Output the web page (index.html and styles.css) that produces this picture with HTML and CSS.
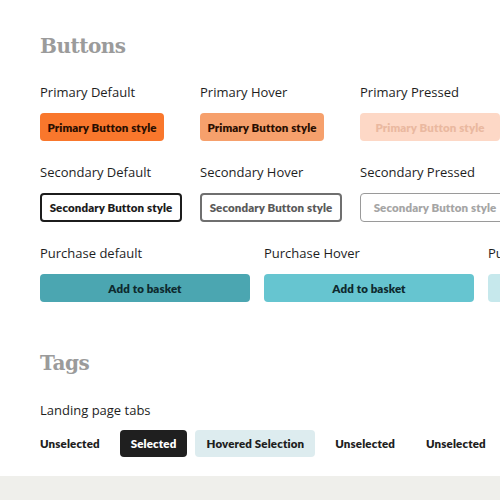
FILE: index.html
```html
<!DOCTYPE html>
<html>
<head>
<meta charset="utf-8">
<link rel="stylesheet" href="styles.css">
</head>
<body>
<main class="page">
  <h2 class="section-title">Buttons</h2>
  <div class="row row-3">
    <div class="cell">
      <div class="label">Primary Default</div>
      <span class="btn btn-primary">Primary Button style</span>
    </div>
    <div class="cell">
      <div class="label">Primary Hover</div>
      <span class="btn btn-primary-hover">Primary Button style</span>
    </div>
    <div class="cell">
      <div class="label">Primary Pressed</div>
      <span class="btn btn-primary-pressed">Primary Button style</span>
    </div>
  </div>
  <div class="row row-3">
    <div class="cell">
      <div class="label">Secondary Default</div>
      <span class="btn btn-sec">Secondary Button style</span>
    </div>
    <div class="cell">
      <div class="label">Secondary Hover</div>
      <span class="btn btn-sec btn-sec-hover">Secondary Button style</span>
    </div>
    <div class="cell">
      <div class="label">Secondary Pressed</div>
      <span class="btn btn-sec btn-sec-pressed">Secondary Button style</span>
    </div>
  </div>
  <div class="row row-purchase">
    <div class="cell">
      <div class="label">Purchase default</div>
      <span class="btn btn-buy">Add to basket</span>
    </div>
    <div class="cell">
      <div class="label">Purchase Hover</div>
      <span class="btn btn-buy btn-buy-hover">Add to basket</span>
    </div>
    <div class="cell">
      <div class="label">Purchase Pressed</div>
      <span class="btn btn-buy btn-buy-pressed">Add to basket</span>
    </div>
  </div>

  <h2 class="section-title tags-title">Tags</h2>
  <div class="label">Landing page tabs</div>
  <div class="tags">
    <span class="tag">Unselected</span>
    <span class="tag tag-selected">Selected</span>
    <span class="tag tag-hover">Hovered Selection</span>
    <span class="tag">Unselected</span>
    <span class="tag">Unselected</span>
  </div>
</main>
<footer class="footer"></footer>
</body>
</html>
```
FILE: styles.css
```css
html, body {
  margin: 0;
  padding: 0;
  width: 500px;
  height: 500px;
  overflow: hidden;
  background: #ffffff;
}
.page {
  height: 476px;
  padding: 33px 0 0 40px;
  box-sizing: border-box;
  overflow: hidden;
}
.section-title {
  margin: 0;
  font-family: "DejaVu Serif", serif;
  font-weight: bold;
  font-size: 20px;
  line-height: 26px;
  color: #9b9b9b;
  letter-spacing: -0.5px;
}
.row {
  display: grid;
  width: 700px;
  margin-top: 23px;
}
.row + .row { margin-top: 21px; }
.row-3 { grid-template-columns: 160px 160px 160px; }
.row-purchase { grid-template-columns: 224px 224px 224px; }
.cell { display: flex; flex-direction: column; align-items: flex-start; }
.label {
  font-family: "Open Sans", sans-serif;
  font-size: 13px;
  line-height: 20px;
  color: #1e1e1e;
  margin-bottom: 11px;
}
.btn {
  box-sizing: border-box;
  height: 28px;
  display: flex;
  align-items: center;
  justify-content: center;
  border-radius: 4px;
  font-family: "Lato", sans-serif;
  font-weight: 800;
  font-size: 11.5px;
  letter-spacing: 0.1px;
  white-space: nowrap;
}
.btn-primary { width: 124px; background: #f9772c; color: #2a0e00; }
.btn-primary-hover { width: 124px; background: #f6a06c; color: #2a0e00; }
.btn-primary-pressed { width: 140px; background: #fdd8c6; color: #eab8a0; }
.btn-sec {
  width: 142px;
  height: 29px;
  border: 2px solid #1c1c1c;
  background: #fff;
  color: #1c1c1c;
}
.btn-sec-hover { border-color: #6f6f6f; color: #5a5a5a; }
.btn-sec-pressed { border: 1.5px solid #9a9a9a; color: #a5a5a5; width: 150px; }
.btn-buy { width: 210px; background: #4ba6b1; color: #0e2a2e; }
.btn-buy-hover { background: #66c5d0; }
.btn-buy-pressed { background: #c6e8ec; color: #7fb8bf; }
.tags-title { margin-top: 48px; }
.tags-title + .label { margin-top: 24px; margin-bottom: 10px; }
.tags {
  display: flex;
  align-items: center;
  white-space: nowrap;
}
.tag {
  box-sizing: border-box;
  height: 27px;
  display: flex;
  align-items: center;
  padding: 0 11px;
  border-radius: 4px;
  font-family: "Lato", sans-serif;
  font-weight: 800;
  font-size: 11.5px;
  letter-spacing: 0.15px;
  color: #1e1e1e;
}
.tag:first-child { padding-left: 0; margin-right: 9px; }
.tag-selected { background: #1f1f1f; color: #ffffff; margin-right: 8px; }
.tag-hover { background: #ddecef; margin-right: 9px; }
.tag-hover + .tag { margin-right: 9px; }
.footer {
  height: 24px;
  background: #efefeb;
}
```
